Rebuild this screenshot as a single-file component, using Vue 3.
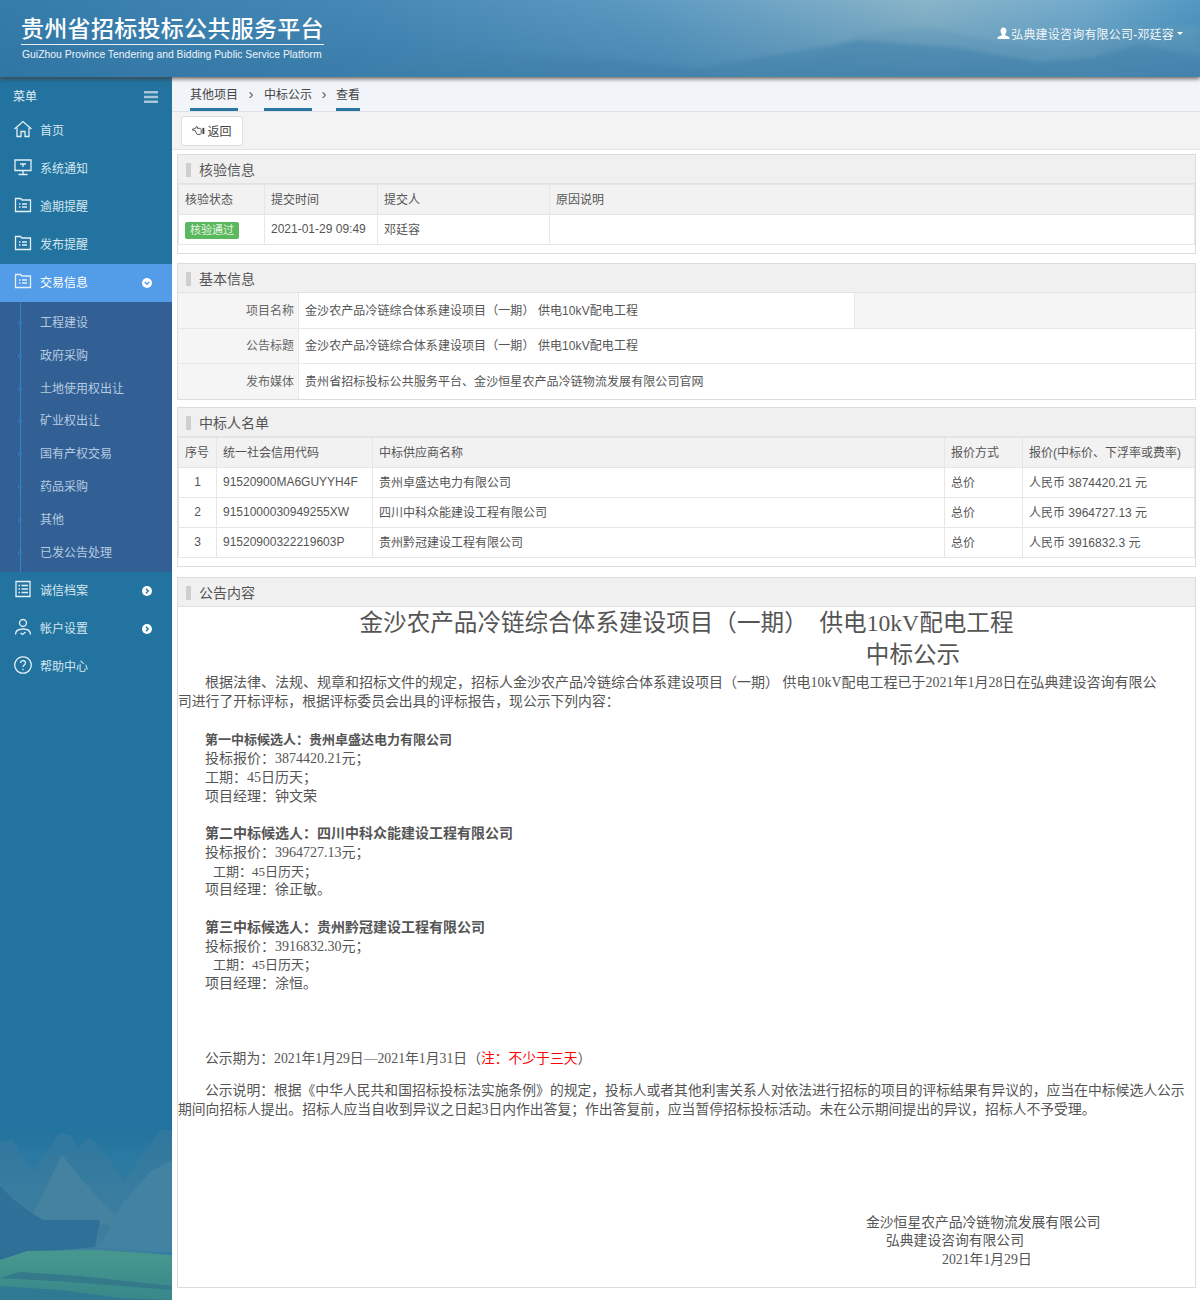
<template>
  <div class="page">
    <header class="top">
      <svg class="top-bg" viewBox="0 0 1200 77" preserveAspectRatio="none">
        <defs>
          <linearGradient id="topSky" x1="0" x2="1" y1="0" y2="0">
            <stop offset="0" stop-color="#357cab" />
            <stop offset="0.3" stop-color="#4688b6" />
            <stop offset="0.55" stop-color="#5f9bc2" />
            <stop offset="0.77" stop-color="#8ab5c9" />
            <stop offset="0.9" stop-color="#74abcb" />
            <stop offset="1" stop-color="#5198c2" />
          </linearGradient>
          <linearGradient id="topFade" x1="0" x2="0" y1="0" y2="1">
            <stop offset="0" stop-color="#2a6f9c" stop-opacity="0" />
            <stop offset="1" stop-color="#2a6f9c" stop-opacity="0.45" />
          </linearGradient>
          <filter id="soft"><feGaussianBlur stdDeviation="2" /></filter>
        </defs>
        <rect width="1200" height="77" fill="url(#topSky)" />
        <g filter="url(#soft)">
          <path d="M780 80 L860 34 L930 28 L1010 44 L1060 50 L1130 28 L1200 26 L1200 80 Z" fill="#6fa3c0" opacity="0.55" />
          <path d="M330 80 L420 58 L470 52 L540 56 L610 60 L700 68 L780 54 L860 40 L960 48 L1040 62 L1090 58 L1140 44 L1200 56 L1200 80 Z" fill="#4f8cb2" opacity="0.6" />
        </g>
        <rect width="1200" height="77" fill="url(#topFade)" />
      </svg>
      <div class="brand">
        <div class="brand-cn">贵州省招标投标公共服务平台</div>
        <div class="brand-en">GuiZhou Province Tendering and Bidding Public Service Platform</div>
      </div>
      <div class="user">
        <svg class="user-icon" viewBox="0 0 14 14">
          <path d="M7 .5c2 0 3.200 1.500 3.200 3.500 0 1.500-.6 2.900-1.400 3.700v1.200c1.600.6 4.200 1.300 4.700 2.600v1.500H.5v-1.500c.5-1.300 3.100-2 4.700-2.600V7.700C4.400 6.900 3.800 5.500 3.800 4 3.800 2 5 .5 7 .5z" fill="#fff" />
        </svg>
        <span>弘典建设咨询有限公司-邓廷容</span>
        <i class="caret"></i>
      </div>
    </header>

    <div class="body">
      <aside class="side">
        <svg class="side-bg" viewBox="0 0 172 180" preserveAspectRatio="none">
          <defs>
            <linearGradient id="sideField" x1="0" x2="0" y1="0" y2="1">
              <stop offset="0" stop-color="#47998f" />
              <stop offset="1" stop-color="#38878a" />
            </linearGradient>
            <linearGradient id="sideRock" x1="0" x2="0" y1="0" y2="1">
              <stop offset="0" stop-color="#30779f" />
              <stop offset="1" stop-color="#41809f" />
            </linearGradient>
            <linearGradient id="sideHaze" x1="0" x2="0" y1="0" y2="1">
              <stop offset="0" stop-color="#22739f" stop-opacity="0" />
              <stop offset="0.25" stop-color="#2a79a2" />
              <stop offset="1" stop-color="#327ba1" />
            </linearGradient>
            <filter id="rock" x="0" y="0" width="1" height="1">
              <feGaussianBlur stdDeviation="0.7" />
            </filter>
          </defs>
          <rect width="172" height="135" fill="url(#sideHaze)" />
          <g filter="url(#rock)">
            <path d="M0 22 L13 20 L32 52 L60 13 L70 15 L78 28 L90 17 L125 60 L160 10 L172 10 L172 132 L0 140 Z" fill="url(#sideRock)" />
            <path d="M32 95 L62 35 L84 62 L110 90 L130 110 L100 104 L44 100 Z" fill="#44829f" />
            <path d="M100 128 L122 84 L150 52 L172 40 L172 132 Z" fill="#4382a2" />
            <path d="M0 66 L14 80 L30 92 L43 100 L100 100 L95 127 L27 133 L0 140 Z" fill="#2e7098" />
          </g>
          <path d="M0 140 L27 131 L95 130 L172 135 L172 180 L0 180 Z" fill="url(#sideField)" />
          <path d="M0 158 L70 162 L172 170 L172 166 L80 156 L20 152 Z" fill="#347a8a" />
          <path d="M0 166 L60 170 L120 178 L172 180 L0 180 Z" fill="#2f7a92" />
        </svg>
        <div class="side-head">
          <span>菜单</span>
          <svg class="burger" viewBox="0 0 14 12"><path d="M0 0h14v2.500H0zM0 4.700h14v2.500H0zM0 9.400h14v2.500H0z" fill="#a9c6d8" /></svg>
        </div>
        <ul class="menu">
          <li v-for="item in menuTop" :key="item.name" class="menu-item" :class="{ active: item.active }">
            <svg class="menu-icon" viewBox="0 0 20 20" fill="none" stroke="#e4f0f6" stroke-width="1.300">
              <path v-for="d in icons[item.icon]" :key="d" :d="d" />
            </svg>
            <span class="menu-name">{{ item.name }}</span>
            <svg v-if="item.active" class="arrow" viewBox="0 0 10 10">
              <circle cx="5" cy="5" r="5" fill="#fff" />
              <path d="M2.800 4l2.200 2.200L7.200 4" fill="none" stroke="#539be6" stroke-width="1.400" />
            </svg>
          </li>
        </ul>
        <ul class="sub">
          <li v-for="s in subMenu" :key="s" class="sub-item">{{ s }}</li>
        </ul>
        <ul class="menu">
          <li v-for="item in menuBottom" :key="item.name" class="menu-item">
            <svg class="menu-icon" viewBox="0 0 20 20" fill="none" stroke="#e4f0f6" stroke-width="1.300">
              <path v-for="d in icons[item.icon]" :key="d" :d="d" />
            </svg>
            <span class="menu-name">{{ item.name }}</span>
            <svg v-if="item.more" class="arrow" viewBox="0 0 10 10">
              <circle cx="5" cy="5" r="5" fill="#fff" />
              <path d="M4 2.800L6.200 5 4 7.200" fill="none" stroke="#22739f" stroke-width="1.400" />
            </svg>
          </li>
        </ul>
      </aside>

      <main class="main">
        <nav class="crumb">
          <a>其他项目</a><em>›</em><a>中标公示</a><em class="near">›</em><a>查看</a>
        </nav>
        <div class="tools">
          <button class="back">
            <svg viewBox="0 0 16 12" class="back-icon" fill="none" stroke="#444" stroke-width="1">
              <path d="M.5 4.500L4 3.500 5 1.500l1.500.5L6 3.500h3.500l1 1v4.500l-1 1.500H6L4.500 8 3.500 6 .5 5.500z" />
              <path d="M13 3v7" stroke-width="2.200" />
            </svg>
            返回
          </button>
        </div>

        <section class="panel">
          <h3 class="panel-title">核验信息</h3>
          <table class="grid check">
            <thead>
              <tr><th class="c1">核验状态</th><th class="c2">提交时间</th><th class="c3">提交人</th><th>原因说明</th></tr>
            </thead>
            <tbody>
              <tr>
                <td class="tag-cell"><span class="tag">核验通过</span></td>
                <td>2021-01-29 09:49</td>
                <td>邓廷容</td>
                <td></td>
              </tr>
            </tbody>
          </table>
        </section>

        <section class="panel basic">
          <h3 class="panel-title">基本信息</h3>
          <div class="info-row r1">
            <div class="info-label">项目名称</div>
            <div class="info-value narrow">金沙农产品冷链综合体系建设项目（一期） 供电10kV配电工程</div>
            <div class="info-rest"></div>
          </div>
          <div class="info-row r2">
            <div class="info-label">公告标题</div>
            <div class="info-value">金沙农产品冷链综合体系建设项目（一期） 供电10kV配电工程</div>
          </div>
          <div class="info-row r3">
            <div class="info-label">发布媒体</div>
            <div class="info-value">贵州省招标投标公共服务平台、金沙恒星农产品冷链物流发展有限公司官网</div>
          </div>
        </section>

        <section class="panel list">
          <h3 class="panel-title">中标人名单</h3>
          <table class="grid winners">
            <thead>
              <tr>
                <th class="w1">序号</th><th class="w2">统一社会信用代码</th><th>中标供应商名称</th>
                <th class="w4">报价方式</th><th class="w5">报价(中标价、下浮率或费率)</th>
              </tr>
            </thead>
            <tbody>
              <tr v-for="w in winners" :key="w.no">
                <td class="center">{{ w.no }}</td>
                <td>{{ w.code }}</td>
                <td>{{ w.name }}</td>
                <td>总价</td>
                <td>人民币 {{ w.price }} 元</td>
              </tr>
            </tbody>
          </table>
        </section>

        <section class="panel notice">
          <h3 class="panel-title">公告内容</h3>
          <div class="content">
            <h1 class="doc-title">金沙农产品冷链综合体系建设项目（一期）&nbsp; 供电10kV配电工程</h1>
            <h1 class="doc-title second">中标公示</h1>
            <p class="indent lead">根据法律、法规、规章和招标文件的规定，招标人金沙农产品冷链综合体系建设项目（一期） 供电10kV配电工程已于2021年1月28日在弘典建设咨询有限公<br /><span class="tight">司进行了开标评标，根据评标委员会出具的评标报告，现公示下列内容：</span></p>
            <div v-for="c in candidates" :key="c.title" class="cand">
              <b :class="{ small: c.small }">{{ c.title }}</b><br />
              投标报价：{{ c.price }}元；<br />
              <span :class="{ pad: c.pad }">工期：{{ c.days }}日历天；</span><br />
              项目经理：{{ c.manager }}
            </div>
            <p class="period tight">公示期为：2021年1月29日—2021年1月31日（<span class="red">注：不少于三天</span>）</p>
            <p class="indent explain tight">公示说明：根据《中华人民共和国招标投标法实施条例》的规定，投标人或者其他利害关系人对依法进行招标的项目的评标结果有异议的，应当在中标候选人公示<br />期间向招标人提出。招标人应当自收到异议之日起3日内作出答复；作出答复前，应当暂停招标投标活动。未在公示期间提出的异议，招标人不予受理。</p>
            <div class="sign tight">
              <div class="s1">金沙恒星农产品冷链物流发展有限公司</div>
              <div class="s2">弘典建设咨询有限公司</div>
              <div class="s3">2021年1月29日</div>
            </div>
          </div>
        </section>
      </main>
    </div>
  </div>
</template>

<script setup>
const listDoc = ['M2.500 3.500h5l1.500 1.500h8.500v11.500h-15z', 'M6 9h1.500M9 9h5M6 12h1.500M9 12h5']

const icons = {
  home: ['M1.500 10L10 2.500l8.500 7.500', 'M4 8.500V17.500h4v-5h4v5h4V8.500'],
  screen: ['M2 3h16v10.500H2z', 'M7 7h6M10 7v3', 'M10 13.500V17M5.500 17.500h9'],
  folder: listDoc,
  list: ['M3 2.500h14v15H3z', 'M5.500 6.500h1.500M8.500 6.500h6.500M5.500 10h1.500M8.500 10h6.500M5.500 13.500h1.500M8.500 13.500h6.500'],
  user: ['M10 2.500a3.500 3.500 0 1 1-.01 0z', 'M2.500 17.500c0-3.500 3-5.500 7.500-5.500s7.500 2 7.500 5.500', 'M7.500 16l2 1.500 3-2.500'],
  help: ['M10 1.800a8.200 8.200 0 1 1-.01 0z', 'M7.500 8c0-3.300 5-3.300 5 0 0 2-2.500 2-2.500 4', 'M10 13.800v1.500']
}

const menuTop = [
  { name: '首页', icon: 'home' },
  { name: '系统通知', icon: 'screen' },
  { name: '逾期提醒', icon: 'folder' },
  { name: '发布提醒', icon: 'folder' },
  { name: '交易信息', icon: 'folder', active: true }
]

const subMenu = ['工程建设', '政府采购', '土地使用权出让', '矿业权出让', '国有产权交易', '药品采购', '其他', '已发公告处理']

const menuBottom = [
  { name: '诚信档案', icon: 'list', more: true },
  { name: '帐户设置', icon: 'user', more: true },
  { name: '帮助中心', icon: 'help' }
]

const winners = [
  { no: 1, code: '91520900MA6GUYYH4F', name: '贵州卓盛达电力有限公司', price: '3874420.21' },
  { no: 2, code: '9151000030949255XW', name: '四川中科众能建设工程有限公司', price: '3964727.13' },
  { no: 3, code: '91520900322219603P', name: '贵州黔冠建设工程有限公司', price: '3916832.3' }
]

const candidates = [
  { title: '第一中标候选人：贵州卓盛达电力有限公司', price: '3874420.21', days: 45, manager: '钟文荣', small: true },
  { title: '第二中标候选人：四川中科众能建设工程有限公司', price: '3964727.13', days: 45, manager: '徐正敏。', pad: true },
  { title: '第三中标候选人：贵州黔冠建设工程有限公司', price: '3916832.30', days: 45, manager: '涂恒。', pad: true }
]
</script>

<style scoped>
.page {
  width: 1200px;
  height: 1300px;
  overflow: hidden;
  display: flex;
  flex-direction: column;
  font-family: "Liberation Sans", "Noto Sans CJK SC", sans-serif;
  font-size: 12px;
  color: #555;
  background: #fff;
}

.top {
  position: relative;
  z-index: 2;
  height: 77px;
  flex: none;
  display: flex;
  justify-content: space-between;
  box-shadow: 0 2px 4px rgba(70, 60, 50, 0.75);
}

.top-bg {
  position: absolute;
  left: 0;
  top: 0;
  width: 100%;
  height: 100%;
}

.brand {
  position: relative;
  margin: 15px 0 0 21px;
  width: 303px;
  color: #fff;
}

.brand-cn {
  font-size: 23px;
  line-height: 29px;
  font-weight: 500;
  letter-spacing: 0.3px;
  white-space: nowrap;
  border-bottom: 1px solid #e6f0f5;
}

.brand-en {
  font-size: 10.400px;
  line-height: 20px;
  padding-left: 1px;
  white-space: nowrap;
  color: #eef4f8;
}

.user {
  position: relative;
  display: flex;
  align-items: center;
  gap: 1px;
  height: 14px;
  margin: 26px 17px 0 0;
  color: #f2f7fa;
  font-size: 12px;
  letter-spacing: 0.2px;
}

.user-icon {
  width: 13px;
  height: 13px;
}

.caret {
  width: 0;
  height: 0;
  margin-left: 2px;
  border-left: 3.500px solid transparent;
  border-right: 3.500px solid transparent;
  border-top: 3.500px solid #fff;
}

.body {
  flex: 1;
  display: flex;
  min-height: 0;
}

.side {
  position: relative;
  width: 172px;
  flex: none;
  background: #22739f;
  color: #d5e6f0;
}

.side-bg {
  position: absolute;
  left: 0;
  bottom: 0;
  width: 172px;
  height: 180px;
}

.side-head {
  position: relative;
  height: 35px;
  padding: 13px 14px 0 13px;
  box-sizing: border-box;
  display: flex;
  justify-content: space-between;
  line-height: 14px;
  color: #e2eef5;
}

.burger {
  width: 14px;
  height: 12px;
  margin-top: 1px;
}

.menu,
.sub {
  position: relative;
  list-style: none;
  margin: 0;
  padding: 0;
}

.menu-item {
  position: relative;
  height: 38px;
  box-sizing: border-box;
  display: flex;
  align-items: center;
  padding: 0 0 4px 13px;
}

.menu-item.active {
  background: #539ce8;
  color: #fff;
}

.menu-icon {
  width: 20px;
  height: 20px;
  flex: none;
}

.menu-name {
  margin-left: 7px;
}

.arrow {
  position: absolute;
  right: 20px;
  top: 14px;
  width: 10px;
  height: 10px;
}

.sub {
  background: #336094;
  height: 270px;
  padding-top: 5px;
  box-sizing: border-box;
}

.sub::before {
  content: "";
  position: absolute;
  left: 20px;
  top: 0;
  bottom: 0;
  width: 1px;
  background: #2f86c8;
}

.sub-item {
  position: relative;
  height: 32.800px;
  line-height: 32.800px;
  padding-left: 40px;
  color: #b5cbe0;
}

.sub-item::before {
  content: "";
  position: absolute;
  left: 18px;
  top: 14px;
  width: 2px;
  height: 2px;
  border: 1px solid #2f86c8;
  border-radius: 50%;
  background: #336094;
}

.main {
  flex: 1;
  min-width: 0;
  padding: 0 4px 0 5px;
  display: flex;
  flex-direction: column;
}

.crumb {
  margin: 0 -4px 0 -5px;
  height: 35px;
  box-sizing: border-box;
  background: #f1f5f9;
  border-bottom: 1px solid #dde1e4;
  padding: 0 0 0 18px;
  display: flex;
  align-items: stretch;
  color: #444;
}

.crumb a {
  height: 34px;
  line-height: 36px;
  border-bottom: 3px solid #2a75a3;
  box-sizing: border-box;
}

.crumb em {
  width: 26px;
  text-align: center;
  font-style: normal;
  font-size: 15px;
  line-height: 34px;
  color: #555;
}

.crumb em.near {
  width: 24px;
}

.tools {
  margin: 0 -4px 0 -5px;
  height: 38px;
  box-sizing: border-box;
  padding: 4px 0 0 9px;
  background: #f3f3f3;
  border-bottom: 1px solid #e3e3e3;
}

.back {
  width: 62px;
  height: 30px;
  display: flex;
  align-items: center;
  justify-content: center;
  gap: 1px;
  padding: 0 0 2px;
  background: #fff;
  border: 1px solid #ddd;
  border-radius: 3px;
  font: inherit;
  color: #444;
}

.back-icon {
  width: 14px;
  height: 11px;
}

.panel {
  margin-top: 9px;
  border: 1px solid #dcdcdc;
  padding-bottom: 8px;
}

.panel:first-of-type {
  margin-top: 4px;
}

.panel.basic {
  padding-bottom: 0;
}

.panel.list {
  margin-top: 7px;
}

.panel-title {
  margin: 0;
  height: 29px;
  box-sizing: border-box;
  padding-left: 21px;
  position: relative;
  background: #f0f0f0;
  border-bottom: 1px solid #e2e2e2;
  font-size: 14px;
  font-weight: 400;
  line-height: 30px;
  color: #555;
}

.panel-title::before {
  content: "";
  position: absolute;
  left: 8px;
  top: 8px;
  width: 5px;
  height: 14px;
  background: #cfcfcf;
}

.grid {
  width: 100%;
  table-layout: fixed;
  border-collapse: collapse;
}

.grid th,
.grid td {
  height: 30px;
  padding: 0 6px 2px;
  box-sizing: border-box;
  border: 1px solid #e6e6e6;
  font-weight: 400;
  text-align: left;
  white-space: nowrap;
  overflow: hidden;
}

.grid th {
  background: #f2f2f2;
}

.grid td.tag-cell {
  padding: 2px 6px 0;
}

.grid .center {
  text-align: center;
}

.c1 { width: 86px; }
.c2 { width: 113px; }
.c3 { width: 172px; }

.w1 { width: 38px; }
.w2 { width: 156px; }
.w4 { width: 78px; }
.w5 { width: 172px; }

.tag {
  display: inline-block;
  width: 54px;
  height: 17px;
  line-height: 17px;
  text-align: center;
  background: #5cb85c;
  color: #e5f5e5;
  border-radius: 2px;
  font-size: 11px;
}

.info-row {
  display: flex;
  box-sizing: border-box;
  border-top: 1px solid #e8e8e8;
}

.info-row.r1 {
  height: 35px;
  line-height: 37px;
  border-top: 0;
}

.info-row.r2 {
  height: 35px;
  line-height: 35px;
}

.info-row.r3 {
  height: 36px;
  line-height: 37px;
}

.info-label {
  width: 121px;
  flex: none;
  padding-right: 4px;
  box-sizing: border-box;
  text-align: right;
  background: #f5f5f5;
  border-right: 1px solid #e8e8e8;
  color: #666;
}

.info-value {
  flex: 1;
  padding-left: 6px;
  white-space: nowrap;
  letter-spacing: 0.08px;
}

.info-value.narrow {
  flex: none;
  width: 556px;
  box-sizing: border-box;
  border-right: 1px solid #e8e8e8;
}

.info-rest {
  flex: 1;
  background: #f5f5f5;
}

.panel.notice {
  flex: none;
  height: 709px;
  padding-bottom: 0;
  margin-top: 10px;
}

.content {
  font-family: "Liberation Serif", "Noto Sans CJK SC", serif;
  font-size: 14px;
  line-height: 18.700px;
  color: #555;
}

.doc-title {
  margin: 0;
  font-size: 23.600px;
  line-height: 32px;
  font-weight: 400;
  text-align: center;
  white-space: nowrap;
}

.doc-title.second {
  line-height: 33px;
  padding-left: 453px;
}

.content p {
  margin: 0;
  white-space: nowrap;
}

.content .lead {
  margin-top: 2px;
}

.indent {
  text-indent: 27px;
}

.tight {
  font-size: 13.800px;
}

.cand {
  margin-top: 19px;
  padding-left: 27px;
  white-space: nowrap;
}

.cand:first-of-type {
  margin-top: 20px;
}

.cand b {
  font-weight: 700;
}

.cand b.small {
  font-size: 13px;
}

.pad {
  padding-left: 8px;
  font-size: 13px;
}

.content .period {
  margin-top: 56px;
  padding-left: 27px;
}

.content .explain {
  margin-top: 12px;
  line-height: 19px;
}

.red {
  color: #f00;
}

.sign {
  margin-top: 95px;
}

.s1 { padding-left: 688px; }
.s2 { padding-left: 708px; }
.s3 { padding-left: 764px; }
</style>

<style>
html,
body {
  margin: 0;
  background: #fff;
}
</style>
